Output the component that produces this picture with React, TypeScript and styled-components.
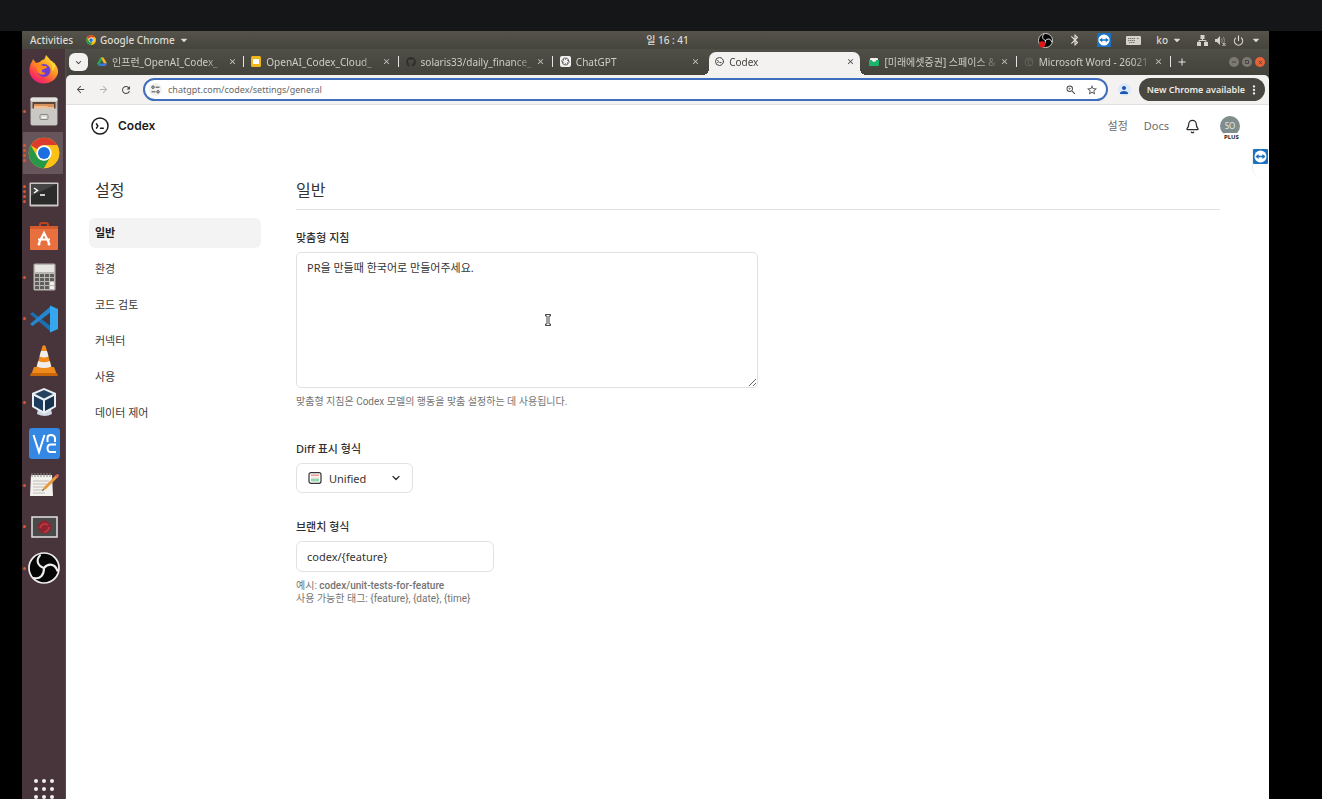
import React from "react";
import styled, { createGlobalStyle, css } from "styled-components";
import {
  MdArrowBack,
  MdArrowForward,
  MdRefresh,
  MdOutlineZoomIn,
  MdStarBorder,
  MdPerson,
  MdMoreVert,
  MdKeyboardArrowDown,
  MdClose,
  MdAdd,
  MdBluetooth,
} from "react-icons/md";
import { FaGithub, FaCaretDown } from "react-icons/fa";
import { Bell, Power, ChevronDown } from "lucide-react";

const uiFont = `"Noto Sans", "Noto Sans CJK KR", sans-serif`;

const GlobalStyle = createGlobalStyle`
  *, *::before, *::after { box-sizing: border-box; }
  body { margin: 0; background: #000; font-family: ${uiFont}; }
  button, input, textarea, select { font-family: inherit; }
  svg { display: block; flex: none; }
  h1, h2, p, ul { margin: 0; padding: 0; }
  ul { list-style: none; }
`;

/* ---------- desktop ---------- */

const Screen = styled.div`
  min-height: 100vh;
  display: flex;
  flex-direction: column;
`;

const Letterbox = styled.div`
  height: 31px;
  background: #141617;
`;

const Desktop = styled.div`
  flex: 1;
  margin: 0 53px 0 22px;
  display: flex;
  flex-direction: column;
`;

const SystemBar = styled.header`
  height: 18px;
  padding: 0 8px;
  display: grid;
  grid-template-columns: 1fr auto 1fr;
  align-items: center;
  background: linear-gradient(#55534a, #45443d);
  color: #dedbd3;
`;

const SystemGroup = styled.div<{ $end?: boolean; $gap: number }>`
  display: flex;
  align-items: center;
  gap: ${(p) => p.$gap}px;
  justify-content: ${(p) => (p.$end ? "flex-end" : "flex-start")};
`;

const SystemButton = styled.button`
  display: flex;
  align-items: center;
  gap: 4px;
  padding: 0;
  border: 0;
  background: none;
  color: inherit;
  font-size: 10px;
  line-height: 16px;
  font-weight: 500;
`;

/* The clock is centred over the area right of the dock. */
const Clock = styled(SystemButton)`
  margin-left: 44px;
`;

const Workspace = styled.div`
  flex: 1;
  display: flex;
`;

const Dock = styled.nav`
  width: 44px;
  flex: none;
  display: flex;
  flex-direction: column;
  justify-content: space-between;
  background: #47353b;
  border-right: 1px solid #5c4b51;
`;

const DockList = styled.ul`
  height: 540px;
  display: flex;
  flex-direction: column;
`;

const DockItem = styled.li<{ $active?: boolean }>`
  flex: 1;
  margin: 0 2px 0 1px;
  padding-right: 1px;
  display: grid;
  grid-template-columns: 3px 1fr;
  align-items: center;
  ${(p) => p.$active && css`background: #66565b;`}
`;

const Pips = styled.span`
  display: flex;
  flex-direction: column;
  align-items: center;
  gap: 2px;
`;

const Pip = styled.i`
  width: 3px;
  height: 3px;
  border-radius: 50%;
  background: #d9582f;
`;

const DockButton = styled.button`
  display: flex;
  justify-content: center;
  padding: 0;
  border: 0;
  background: none;
`;

/* ---------- browser ---------- */

const Browser = styled.div`
  flex: 1;
  min-width: 0;
  display: flex;
  flex-direction: column;
  position: relative;
  background: #fff;
`;

const TabStrip = styled.div`
  height: 26px;
  display: flex;
  align-items: center;
  padding: 0 2px 0 3px;
  background: linear-gradient(#504f47, #43423b);
`;

const TabSearch = styled.button`
  width: 19px;
  height: 18px;
  margin-right: 2px;
  padding: 0;
  display: grid;
  place-items: center;
  border: 0;
  border-radius: 6px;
  background: #f3f2f1;
  color: #333;
`;

const Tabs = styled.div`
  flex: 1;
  min-width: 0;
  height: 100%;
  display: flex;
`;

const Tab = styled.div<{ $active?: boolean; $divider?: boolean }>`
  flex: 1;
  min-width: 0;
  position: relative;
  display: flex;
  align-items: center;
  padding: 0 7px 1px;
  color: #cfcdc5;
  ${(p) =>
    p.$divider &&
    css`
      &::after {
        content: "";
        position: absolute;
        right: 0;
        top: 7px;
        width: 1px;
        height: 11px;
        background: #e6e4df;
      }
    `}
  ${(p) =>
    p.$active &&
    css`
      margin: 3px 2px 0;
      padding: 0 5px 4px 6px;
      border-radius: 7px 7px 0 0;
      background: #f3f2f1;
      color: #45443f;
      &::before,
      &::after {
        content: "";
        position: absolute;
        bottom: 0;
        width: 6px;
        height: 6px;
      }
      &::before {
        left: -6px;
        background: radial-gradient(circle at 0 0, transparent 6px, #f3f2f1 6px);
      }
      &::after {
        right: -6px;
        background: radial-gradient(circle at 100% 0, transparent 6px, #f3f2f1 6px);
      }
    `}
`;

const TabTitle = styled.span`
  flex: 1;
  min-width: 0;
  margin-left: 5px;
  overflow: hidden;
  white-space: nowrap;
  font-size: 10px;
  line-height: 16px;
  mask-image: linear-gradient(to right, #000 calc(100% - 22px), transparent);
`;

const IconButton = styled.button<{ $size: number }>`
  width: ${(p) => p.$size}px;
  height: ${(p) => p.$size}px;
  flex: none;
  padding: 0;
  display: grid;
  place-items: center;
  border: 0;
  background: none;
  color: inherit;
`;

const StripEnd = styled.div`
  width: 96px;
  display: flex;
  align-items: center;
  justify-content: space-between;
  padding-left: 5px;
  color: #e6e4df;
`;

const WindowButtons = styled.div`
  display: flex;
  gap: 3px;
  margin-right: 2px;
`;

const WindowButton = styled.button<{ $close?: boolean }>`
  width: 10px;
  height: 10px;
  padding: 0;
  display: grid;
  place-items: center;
  border: 0;
  border-radius: 50%;
  background: ${(p) => (p.$close ? "#ea6237" : "#7b7971")};
  color: #45443d;
`;

const ToolbarBack = styled.div`
  background: #43423b;
`;

const Toolbar = styled.div`
  height: 30px;
  display: flex;
  align-items: center;
  padding: 0 4px 0 8px;
  background: #f3f2f1;
  border-bottom: 1px solid #e2dfdd;
  border-radius: 5px 5px 0 0;
  color: #4a4a48;
`;

const NavButtons = styled.div`
  display: flex;
  gap: 11px;
  margin-right: 11px;
`;

const NavButton = styled(IconButton)`
  &:disabled {
    color: #b5b3b0;
  }
`;

const AddressBar = styled.form`
  flex: 1;
  min-width: 0;
  height: 23px;
  display: flex;
  align-items: center;
  padding: 0 8px 0 4px;
  border: 2px solid #3f6fbc;
  border-radius: 12px;
  background: #fff;
`;

const SiteChip = styled.button`
  width: 13px;
  height: 13px;
  padding: 0;
  margin-right: 6px;
  display: grid;
  place-items: center;
  border: 0;
  border-radius: 50%;
  background: #f0f0ef;
  color: #444;
`;

const AddressInput = styled.input`
  flex: 1;
  min-width: 0;
  padding: 0;
  border: 0;
  outline: 0;
  background: none;
  color: #686868;
  font-size: 9px;
  line-height: 16px;
`;

const AddressActions = styled.div`
  display: flex;
  gap: 9px;
`;

const Profile = styled(IconButton)`
  margin: 0 8px 0 10px;
  border-radius: 50%;
  background: #dce9fb;
  color: #1b56b5;
`;

const UpdateButton = styled.button`
  height: 23px;
  padding: 0 4px 0 8px;
  display: flex;
  align-items: center;
  gap: 2px;
  border: 0;
  border-radius: 12px;
  background: #484740;
  color: #eceae5;
  font-size: 9px;
  font-weight: 600;
  line-height: 16px;
  white-space: nowrap;
`;

/* ---------- page ---------- */

const PageHeader = styled.header`
  height: 41px;
  display: flex;
  align-items: center;
  justify-content: space-between;
  padding: 0 29px 0 25px;
`;

const Brand = styled.a`
  display: flex;
  align-items: center;
  gap: 9px;
  color: #1c1c1c;
  font-family: Inter, sans-serif;
  font-size: 12px;
  font-weight: 600;
  text-decoration: none;
`;

const HeaderLinks = styled.div`
  display: flex;
  align-items: center;
  gap: 16px;
  padding-top: 1px;
  color: #2b2b2b;
`;

const HeaderLink = styled.a`
  color: #6b6b6b;
  font-size: 11px;
  line-height: 16px;
  text-decoration: none;
`;

const AvatarButton = styled.button`
  position: relative;
  width: 20px;
  height: 20px;
  margin-left: 4px;
  padding: 0;
  border: 0;
  border-radius: 50%;
  background: #7f8d8c;
  color: #e3e8e7;
  font-size: 8px;
  line-height: 20px;
`;

const PlanBadge = styled.span`
  position: absolute;
  left: 2px;
  top: 17px;
  padding: 0 2px;
  border-radius: 4px;
  background: #fff;
  color: #222;
  font-size: 6px;
  line-height: 8px;
  font-weight: 700;
`;

const PageBody = styled.div`
  display: flex;
  padding: 32px 49px 40px 23px;
`;

const Sidebar = styled.nav`
  width: 172px;
  flex: none;
  margin-right: 35px;
`;

const SideTitle = styled.h2`
  padding: 0 6px;
  color: #333;
  font-size: 16px;
  line-height: 24px;
  font-weight: 400;
`;

const SideList = styled.ul`
  display: flex;
  flex-direction: column;
  gap: 6px;
  margin-top: 16px;
`;

const SideLink = styled.a<{ $current?: boolean }>`
  display: block;
  padding: 0 6px;
  border-radius: 6px;
  color: ${(p) => (p.$current ? "#1c1c1c" : "#3a3a3a")};
  background: ${(p) => (p.$current ? "#f3f3f3" : "none")};
  font-size: 11px;
  line-height: 30px;
  font-weight: ${(p) => (p.$current ? 700 : 400)};
  text-decoration: none;
`;

const Main = styled.main`
  flex: 1;
  min-width: 0;
`;

const MainTitle = styled.h1`
  padding-bottom: 7px;
  border-bottom: 1px solid #e2e2e2;
  color: #333;
  font-size: 16px;
  line-height: 24px;
  font-weight: 400;
`;

const Field = styled.div`
  display: flex;
  flex-direction: column;
  align-items: flex-start;
  margin-top: 26px;
  &:first-of-type {
    margin-top: 20px;
  }
`;

const FieldLabel = styled.label`
  margin-bottom: 6px;
  color: #2f2f2f;
  font-size: 11px;
  line-height: 16px;
  font-weight: 500;
`;

const TextAreaWrap = styled.div`
  position: relative;
  width: 50%;
`;

const TextArea = styled.textarea`
  display: block;
  width: 100%;
  height: 136px;
  padding: 7px 10px;
  border: 1px solid #e0e0e0;
  border-radius: 5px;
  outline: 0;
  background: #fff;
  color: #333;
  font-size: 11px;
  line-height: 16px;
`;

const TextCursor = styled.svg`
  position: absolute;
  left: 54%;
  top: 62px;
`;

const Hint = styled.p`
  margin: 7px 0;
  color: #737373;
  font-family: Roboto, "Noto Sans CJK KR", sans-serif;
  font-size: 10px;
  line-height: 13px;
  b {
    font-weight: 500;
  }
`;

const SelectWrap = styled.div`
  position: relative;
  width: 117px;
  color: #2f2f2f;
`;

const Select = styled.select`
  display: block;
  appearance: none;
  width: 100%;
  height: 30px;
  padding: 0 24px 0 32px;
  border: 1px solid #e2e2e2;
  border-radius: 6px;
  background: #fff;
  color: #333;
  font-size: 11px;
`;

const SelectIcon = styled.span<{ $end?: boolean }>`
  position: absolute;
  top: 9px;
  ${(p) => (p.$end ? "right: 11px;" : "left: 12px;")}
  pointer-events: none;
`;

const TextInput = styled.input`
  width: 198px;
  height: 31px;
  padding: 0 10px;
  border: 1px solid #e2e2e2;
  border-radius: 6px;
  background: #fff;
  color: #333;
  font-size: 11px;
`;

const RemoteTab = styled.aside`
  position: absolute;
  right: 0;
  top: 100px;
  width: 17px;
  height: 29px;
  border-left: 1px solid #eee;
  border-radius: 0 0 0 10px;
`;

/* ---------- drawings ---------- */

const ChromeLogo = ({ size }: { size: number }) => (
  <svg width={size} height={size} viewBox="0 0 48 48">
    <circle cx="24" cy="24" r="23" fill="#fbc116" />
    <path d="M4.1 12.5A23 23 0 0 1 43.9 12.5H24A11.5 11.5 0 0 0 14 18.3z" fill="#dd3b2c" />
    <path d="M4.1 12.5 14 29.7A11.5 11.5 0 0 0 24 35.5h4L24 47A23 23 0 0 1 4.1 12.5z" fill="#279847" />
    <path d="M34 29.7 24 47l-5-12z" fill="#279847" />
    <path d="M24 12.5h19.9A23 23 0 0 1 24 47l10-17.3z" fill="#fbc116" />
    <circle cx="24" cy="24" r="11.5" fill="#fff" />
    <circle cx="24" cy="24" r="9" fill="#1b6fe0" />
  </svg>
);

const ObsLogo = ({ size, recording }: { size: number; recording?: boolean }) => (
  <svg width={size} height={size} viewBox="0 0 48 48">
    <circle cx="24" cy="24" r="22.5" fill="#050505" stroke="#eee" strokeWidth="2.6" />
    <g fill="none" stroke="#eee" strokeWidth="3.2" strokeLinecap="round">
      <path d="M24 24C15 21 11 13 18 5" />
      <path d="M24 24C24 34 19 41 9 39" />
      <path d="M24 24C31 16 41 18 44 28" />
    </g>
    {recording && <circle cx="13" cy="36" r="10" fill="#df1717" />}
  </svg>
);

const TeamViewerLogo = ({ size }: { size: number }) => (
  <svg width={size} height={size} viewBox="0 0 16 16">
    <rect width="16" height="16" rx="1" fill="#1c72c0" />
    <circle cx="8" cy="8" r="6.4" fill="#fff" />
    <path d="M2.5 8 6 5.4v1.7h4V5.4L13.5 8 10 10.6V8.9H6v1.7z" fill="#1c72c0" />
  </svg>
);

const FirefoxLogo = () => (
  <svg width="32" height="32" viewBox="0 0 32 32">
    <defs>
      <linearGradient id="fxBody" x1="0.85" y1="0.05" x2="0.2" y2="1">
        <stop offset="0" stopColor="#ffe23c" />
        <stop offset="0.4" stopColor="#ff9a1f" />
        <stop offset="0.75" stopColor="#ff3f4c" />
        <stop offset="1" stopColor="#e21588" />
      </linearGradient>
    </defs>
    <path d="M3 9c1-1 1.500-2.500 2-4l3 4 4-1c1-1.500 2.500-2.500 4-2.500L17 4l1-3 4 4.500 2 4 2-1c3 3.500 4.500 7 4 10.500A14.500 13.500 0 0 1 1.500 18c-.2-3 .3-6 1.500-9z" fill="url(#fxBody)" />
    <circle cx="16" cy="16.500" r="6.500" fill="#6d3fd1" />
    <path d="M5 10c4-1.500 7 0 9 1.500 2 1 5 0 5 1.500s-4 2-5 3c-1 2 1 3 3 2.500 1 3-6 3-8-1.500-.5-2 .3-3.500 0-4z" fill="#ff8a1c" />
    <path d="M20 6c4 3 5 7 4 11 2-1 3-3 3-6l-3-4z" fill="#ffd33a" />
  </svg>
);

const FilesLogo = () => (
  <svg width="28" height="29" viewBox="0 0 28 29">
    <rect x="0.500" y="0.500" width="27" height="28" rx="2" fill="#b9b7b3" />
    <rect x="0.500" y="0.500" width="27" height="4" rx="1.500" fill="#e4e2df" />
    <rect x="2.500" y="5" width="23" height="8" fill="#5f4538" />
    <path d="M4 7h20v6H4z" fill="#d8905c" />
    <path d="M4 9h13l1 1h6v3H4z" fill="#efbf91" />
    <rect x="1" y="11.500" width="26" height="16.500" rx="1" fill="#c9c8c5" />
    <rect x="10" y="17.500" width="8" height="5" rx="1" fill="#d9d8d5" stroke="#8a8685" />
    <path d="M12 20.500h4" stroke="#fff" />
  </svg>
);

const TerminalLogo = () => (
  <svg width="30" height="25" viewBox="0 0 30 25">
    <rect x="0.500" y="0.500" width="29" height="24" rx="1" fill="#c9c8c5" />
    <rect x="2" y="2" width="26" height="20.500" fill="#2b2b2c" />
    <path d="M2 2h26L2 14z" fill="#454546" />
    <path d="m5 6 3.500 2.500L5 11M11 13h5" fill="none" stroke="#fff" strokeWidth="1.500" />
  </svg>
);

const SoftwareLogo = () => (
  <svg width="28" height="29" viewBox="0 0 28 29">
    <path d="M10 6V4q0-2 2-2h4q2 0 2 2v2" fill="none" stroke="#c4421c" strokeWidth="2" />
    <rect y="5" width="28" height="24" rx="1" fill="#e8703f" />
    <path d="M0 6q0-1 1-1h26q1 0 1 1v2H0z" fill="#d65a2c" />
    <path d="m9 22 5-10 5 10M8 18.500h12" fill="none" stroke="#fff" strokeWidth="2.200" />
    <circle cx="9" cy="23" r="1.500" fill="#fff" />
    <circle cx="19" cy="23" r="1.500" fill="#fff" />
  </svg>
);

const CalculatorLogo = () => (
  <svg width="23" height="28" viewBox="0 0 23 28">
    <rect x="0.500" y="0.500" width="22" height="27" rx="1.500" fill="#b7b6b3" />
    <rect x="2" y="2" width="19" height="7" fill="#e6e5e2" />
    {[0, 1, 2, 3].map((r) =>
      [0, 1, 2, 3].map((c) => (
        <rect
          key={`${r}${c}`}
          x={2 + c * 5}
          y={11 + r * 4}
          width="4"
          height="3"
          rx="0.500"
          fill={c === 3 && r > 1 ? "#f1f0ee" : "#5e5d5b"}
        />
      ))
    )}
  </svg>
);

const CodeLogo = () => (
  <svg width="28" height="28" viewBox="0 0 28 28">
    <path d="m0 9 2.500-2L21 21.500V27z" fill="#1d6fb3" />
    <path d="M0 19 21 1v6L2.500 21z" fill="#2387cf" />
    <path d="M20 .500 28 4v20l-8 3.500z" fill="#34a7ee" />
  </svg>
);

const VlcLogo = () => (
  <svg width="28" height="32" viewBox="0 0 28 32">
    <path d="M4 23h20l3 8H1z" fill="#ef8a1d" />
    <path d="M1 29h26l1 3H0z" fill="#c96708" />
    <path d="M12.500 2q1.500-1.500 3 0L22 25q-8 4-16 0z" fill="#f08a1c" />
    <path d="m11 7 6 0 1.500 5.500q-4.500 2-9 0zM8.200 17q6 2.500 11.600 0l1.500 5.500q-7 3-14.600 0z" fill="#efeeec" />
  </svg>
);

const VirtualBoxLogo = () => (
  <svg width="26" height="30" viewBox="0 0 26 30">
    <path d="M7 22h13l1 5q-7 4-15 0z" fill="#cfd8e4" />
    <path d="M13 1 25 6v14l-12 7L1 20V6z" fill="#e9eef4" />
    <path d="m13 3 9 4-9 4.500L4 7z" fill="#24425f" />
    <path d="m3 9 9 4.500v10.500L3 19z" fill="#1b3c5c" />
    <path d="m23 9-9 4.500v10.500l9-5z" fill="#16324e" />
  </svg>
);

const VncLogo = () => (
  <svg width="31" height="31" viewBox="0 0 31 31">
    <rect width="31" height="31" rx="3" fill="#3487e3" />
    <g fill="none" stroke="#fff" strokeWidth="2">
      <path d="m4.500 7 5.500 17L15.500 7" />
      <path d="M18.500 14V10q0-3 3.500-3t4 3v4" />
      <path d="M27 16.500h-5q-3.500 0-3.500 3.800T22 24h5" />
    </g>
  </svg>
);

const NotesLogo = () => (
  <svg width="30" height="26" viewBox="0 0 30 26">
    <path d="M2 3h21l1 21H1z" fill="#f3f1ec" />
    <path d="M3 1v4M6 1v4M9 1v4M12 1v4M15 1v4M18 1v4M21 1v4" stroke="#8a8682" />
    <path d="M4 9h16M4 12h14M4 15h11M4 18h9M4 21h12" stroke="#c1beb8" />
    <path d="M27 3 15 15l-2 4 4-2L29 5z" fill="#e79a3d" />
    <path d="m26 4 2-2q2 0 2 2l-1.500 2z" fill="#d9605d" />
    <path d="m13 19 1-2 1 1z" fill="#222" />
  </svg>
);

const RecorderLogo = () => (
  <svg width="27" height="22" viewBox="0 0 27 22">
    <rect x="1" y="1" width="25" height="20" fill="#4a4a4b" stroke="#e4e2e0" strokeWidth="1.500" />
    <circle cx="13.500" cy="11" r="6.500" fill="#8d2530" />
    <path d="M9 12a5 5 0 0 1 8-3M18 11a5 5 0 0 1-5 5" fill="none" stroke="#c63b45" strokeWidth="1.500" />
  </svg>
);

const AppsGrid = () => (
  <svg width="20" height="20" viewBox="0 0 20 20">
    {[2, 10, 18].map((y) =>
      [2, 10, 18].map((x) => <circle key={`${x}-${y}`} cx={x} cy={y} r="2" fill="#f1eeee" />)
    )}
  </svg>
);

const DriveIcon = () => (
  <svg width="10" height="10" viewBox="0 0 20 18">
    <path d="M7 0h6l7 12h-6z" fill="#f4b81e" />
    <path d="M7 0 0 12l3 5 7-11.500z" fill="#2aa35a" />
    <path d="M6.500 12H20l-3 5H3z" fill="#3b78e7" />
  </svg>
);

const SlidesIcon = () => (
  <svg width="10" height="11" viewBox="0 0 10 11">
    <rect width="10" height="11" rx="1.500" fill="#f0b71d" />
    <rect x="2" y="3" width="6" height="5" fill="#fff" />
  </svg>
);

const ChatIcon = () => (
  <svg width="11" height="11" viewBox="0 0 22 22">
    <rect width="22" height="22" rx="4" fill="#f3f2f1" />
    <g fill="none" stroke="#555" strokeWidth="1.400">
      {[0, 60, 120, 180, 240, 300].map((a) => (
        <path key={a} d="M11 7.500V5.500a3.500 3.500 0 0 1 6 2.500v4" transform={`rotate(${a} 11 11)`} />
      ))}
    </g>
  </svg>
);

const CodexMark = ({ size, stroke }: { size: number; stroke: number }) => (
  <svg width={size} height={size} viewBox="0 0 18 18" fill="none" stroke="currentColor" strokeWidth={stroke} strokeLinecap="round" strokeLinejoin="round">
    <circle cx="9" cy="9" r="8" />
    <path d="M5.500 6.800 6.800 9l-1.300 2.200M9.500 11.200h2.800" />
  </svg>
);

const MailIcon = () => (
  <svg width="10" height="10" viewBox="0 0 10 10">
    <rect x="1" y="1" width="8" height="4" rx="1" fill="#f1f0ec" />
    <path d="M0 3h2.500Q5 7 7.500 3H10v5q0 1-1 1H1Q0 9 0 8z" fill="#1cb36b" />
  </svg>
);

const GlobeIcon = () => (
  <svg width="10" height="10" viewBox="0 0 10 10" fill="none" stroke="#64625b">
    <circle cx="5" cy="5" r="4" />
    <path d="M2 2.500 5 4l-1 2 2 2M6 1v2l2 1" />
  </svg>
);

const KeyboardIcon = () => (
  <svg width="15" height="9" viewBox="0 0 15 9">
    <rect width="15" height="9" rx="1" fill="#d5d2ca" />
    <path d="M2 2.500h7M2 4.500h7M3 6.500h6M11 2.500h2" stroke="#7b7971" strokeDasharray="1.500 .5" />
  </svg>
);

const NetworkIcon = () => (
  <svg width="11" height="11" viewBox="0 0 11 11" fill="#d5d2ca">
    <path d="M3.500 0h4v4h-4zM0 7h4v4H0zM7 7h4v4H7z" />
    <path d="M5.500 4v1.500M2 7V5.500h7V7" fill="none" stroke="#d5d2ca" />
  </svg>
);

const VolumeIcon = () => (
  <svg width="11" height="11" viewBox="0 0 11 11">
    <path d="M0 4h2l3-3v9L2 7H0z" fill="#d5d2ca" />
    <path d="M6.500 3.500q1.500 2 0 4M8.500 2q2 3.500 0 7" fill="none" stroke="#98958c" />
    <path d="m7.500 8 3 3M10.500 8l-3 3" stroke="#d5d2ca" />
  </svg>
);

const SiteSettingsIcon = () => (
  <svg width="9" height="9" viewBox="0 0 9 9" fill="none" stroke="currentColor">
    <circle cx="2" cy="2.200" r="1.200" />
    <path d="M4.500 2.200h4M.500 6.800h4" />
    <circle cx="7" cy="6.800" r="1.200" />
  </svg>
);

const DiffIcon = () => (
  <svg width="14" height="12" viewBox="0 0 14 12">
    <rect x="1" y="0.700" width="12" height="10.600" rx="2" fill="#fff" stroke="#333" strokeWidth="1.200" />
    <path d="M3 3.200h8" stroke="#ee9a9a" strokeWidth="1.600" />
    <path d="M3 5.200h8" stroke="#f7cfcf" />
    <path d="M3 8h8" stroke="#93d7ac" strokeWidth="3" />
  </svg>
);

/* ---------- data ---------- */

const dockApps: { name: string; icon: React.ReactNode; windows: number; active?: boolean }[] = [
  { name: "Firefox", icon: <FirefoxLogo />, windows: 0 },
  { name: "Files", icon: <FilesLogo />, windows: 1 },
  { name: "Google Chrome", icon: <ChromeLogo size={32} />, windows: 4, active: true },
  { name: "Terminal", icon: <TerminalLogo />, windows: 4 },
  { name: "Ubuntu Software", icon: <SoftwareLogo />, windows: 0 },
  { name: "Calculator", icon: <CalculatorLogo />, windows: 1 },
  { name: "Visual Studio Code", icon: <CodeLogo />, windows: 1 },
  { name: "VLC", icon: <VlcLogo />, windows: 0 },
  { name: "VirtualBox", icon: <VirtualBoxLogo />, windows: 1 },
  { name: "VNC Viewer", icon: <VncLogo />, windows: 0 },
  { name: "Text Editor", icon: <NotesLogo />, windows: 1 },
  { name: "Screen Recorder", icon: <RecorderLogo />, windows: 1 },
  { name: "OBS Studio", icon: <ObsLogo size={32} />, windows: 1 },
];

const tabs: { title: string; icon: React.ReactNode; divider?: boolean; active?: boolean }[] = [
  { title: "인프런_OpenAI_Codex_", icon: <DriveIcon />, divider: true },
  { title: "OpenAI_Codex_Cloud_", icon: <SlidesIcon />, divider: true },
  { title: "solaris33/daily_finance_", icon: <FaGithub size={10} color="#2e2d29" />, divider: true },
  { title: "ChatGPT", icon: <ChatIcon /> },
  { title: "Codex", icon: <CodexMark size={9} stroke={2} />, active: true },
  { title: "[미래에셋증권] 스페이스 &", icon: <MailIcon />, divider: true },
  { title: "Microsoft Word - 26021", icon: <GlobeIcon />, divider: true },
];

const sections = ["일반", "환경", "코드 검토", "커넥터", "사용", "데이터 제어"];

export default function App() {
  return (
    <Screen>
      <GlobalStyle />
      <Letterbox />
      <Desktop>
        <SystemBar>
          <SystemGroup $gap={13}>
            <SystemButton>Activities</SystemButton>
            <SystemButton>
              <ChromeLogo size={10} />
              Google Chrome
              <FaCaretDown size={10} />
            </SystemButton>
          </SystemGroup>
          <Clock>일 16 : 41</Clock>
          <SystemGroup $end $gap={15}>
            <ObsLogo size={15} recording />
            <MdBluetooth size={14} />
            <TeamViewerLogo size={14} />
            <KeyboardIcon />
            <SystemButton>
              ko
              <FaCaretDown size={10} />
            </SystemButton>
            <SystemGroup $gap={7}>
              <NetworkIcon />
              <VolumeIcon />
              <Power size={11} strokeWidth={2.5} />
              <FaCaretDown size={10} />
            </SystemGroup>
          </SystemGroup>
        </SystemBar>
        <Workspace>
          <Dock aria-label="Dock">
            <DockList>
              {dockApps.map((app) => (
                <DockItem key={app.name} $active={app.active}>
                  <Pips>
                    {Array.from({ length: app.windows }, (_, i) => (
                      <Pip key={i} />
                    ))}
                  </Pips>
                  <DockButton aria-label={app.name}>{app.icon}</DockButton>
                </DockItem>
              ))}
            </DockList>
            <DockButton aria-label="Show applications">
              <AppsGrid />
            </DockButton>
          </Dock>
          <Browser>
            <TabStrip>
              <TabSearch aria-label="Search tabs">
                <MdKeyboardArrowDown size={11} />
              </TabSearch>
              <Tabs>
                {tabs.map((tab) => (
                  <Tab key={tab.title} $active={tab.active} $divider={tab.divider}>
                    {tab.icon}
                    <TabTitle>{tab.title}</TabTitle>
                    <IconButton $size={10} aria-label="Close tab">
                      <MdClose size={9} />
                    </IconButton>
                  </Tab>
                ))}
              </Tabs>
              <StripEnd>
                <IconButton $size={12} aria-label="New tab">
                  <MdAdd size={12} />
                </IconButton>
                <WindowButtons>
                  <WindowButton aria-label="Minimize">
                    <svg width="6" height="6"><path d="M1 3h4" stroke="currentColor" /></svg>
                  </WindowButton>
                  <WindowButton aria-label="Restore">
                    <svg width="6" height="6"><path d="M1.500 1.500h3v3h-3z" fill="none" stroke="currentColor" /></svg>
                  </WindowButton>
                  <WindowButton $close aria-label="Close">
                    <MdClose size={7} />
                  </WindowButton>
                </WindowButtons>
              </StripEnd>
            </TabStrip>
            <ToolbarBack>
              <Toolbar>
                <NavButtons>
                  <NavButton $size={12} aria-label="Back"><MdArrowBack size={11} /></NavButton>
                  <NavButton $size={12} aria-label="Forward" disabled><MdArrowForward size={11} /></NavButton>
                  <NavButton $size={12} aria-label="Reload"><MdRefresh size={12} /></NavButton>
                </NavButtons>
                <AddressBar>
                  <SiteChip type="button" aria-label="Site information">
                    <SiteSettingsIcon />
                  </SiteChip>
                  <AddressInput aria-label="Address" defaultValue="chatgpt.com/codex/settings/general" />
                  <AddressActions>
                    <IconButton type="button" $size={12} aria-label="Zoom"><MdOutlineZoomIn size={12} /></IconButton>
                    <IconButton type="button" $size={12} aria-label="Bookmark"><MdStarBorder size={12} /></IconButton>
                  </AddressActions>
                </AddressBar>
                <Profile $size={13} aria-label="Profile"><MdPerson size={12} /></Profile>
                <UpdateButton>
                  New Chrome available
                  <MdMoreVert size={14} />
                </UpdateButton>
              </Toolbar>
            </ToolbarBack>

            <PageHeader>
              <Brand href="#">
                <CodexMark size={18} stroke={1.5} />
                Codex
              </Brand>
              <HeaderLinks>
                <HeaderLink href="#settings">설정</HeaderLink>
                <HeaderLink href="#docs">Docs</HeaderLink>
                <IconButton $size={15} aria-label="Notifications"><Bell size={15} strokeWidth={2} /></IconButton>
                <AvatarButton>
                  SO
                  <PlanBadge>PLUS</PlanBadge>
                </AvatarButton>
              </HeaderLinks>
            </PageHeader>

            <PageBody>
              <Sidebar>
                <SideTitle>설정</SideTitle>
                <SideList>
                  {sections.map((name, i) => (
                    <li key={name}>
                      <SideLink href={`#${name}`} $current={i === 0}>{name}</SideLink>
                    </li>
                  ))}
                </SideList>
              </Sidebar>
              <Main>
                <MainTitle>일반</MainTitle>
                <Field>
                  <FieldLabel htmlFor="instructions">맞춤형 지침</FieldLabel>
                  <TextAreaWrap>
                    <TextArea id="instructions" defaultValue="PR을 만들때 한국어로 만들어주세요." />
                    <TextCursor width="6" height="12" viewBox="0 0 6 12" fill="#fff" stroke="#444">
                      <path d="M.500.500h5v1.500h-1.500v8h1.500v1.500h-5V10H2V2H.500z" />
                    </TextCursor>
                  </TextAreaWrap>
                  <Hint>맞춤형 지침은 Codex 모델의 행동을 맞춤 설정하는 데 사용됩니다.</Hint>
                </Field>
                <Field>
                  <FieldLabel htmlFor="diff">Diff 표시 형식</FieldLabel>
                  <SelectWrap>
                    <Select id="diff" defaultValue="Unified">
                      <option>Unified</option>
                    </Select>
                    <SelectIcon><DiffIcon /></SelectIcon>
                    <SelectIcon $end><ChevronDown size={12} strokeWidth={2.5} /></SelectIcon>
                  </SelectWrap>
                </Field>
                <Field>
                  <FieldLabel htmlFor="branch">브랜치 형식</FieldLabel>
                  <TextInput id="branch" type="text" defaultValue="codex/{feature}" />
                  <Hint>
                    예시: <b>codex/unit-tests-for-feature</b>
                    <br />
                    사용 가능한 태그: {"{feature}, {date}, {time}"}
                  </Hint>
                </Field>
              </Main>
            </PageBody>
            <RemoteTab>
              <TeamViewerLogo size={15} />
            </RemoteTab>
          </Browser>
        </Workspace>
      </Desktop>
    </Screen>
  );
}
